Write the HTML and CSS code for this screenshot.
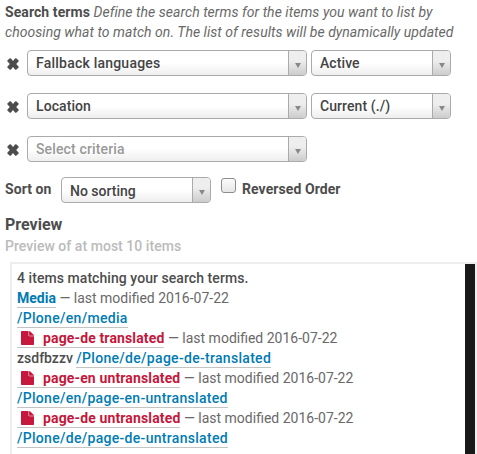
FILE: index.html
```
<!DOCTYPE html>
<html lang="en">
<head>
<meta charset="utf-8">
<title>Search terms</title>
<link rel="stylesheet" href="styles.css">
</head>
<body>
<svg class="defs" aria-hidden="true">
  <symbol id="times" viewBox="0 0 12 12"><path d="M2.8.2Q3.4 0 4 .6L6 2.9 8 .6Q8.6 0 9.2.2L11.6 2.4Q12 3 11.5 3.6L9.2 6 11.5 8.4Q12 9 11.6 9.6L9.2 11.7Q8.6 12 8 11.4L6 9.1 4 11.4Q3.4 12 2.8 11.7L.4 9.6Q0 9 .5 8.4L2.8 6 .5 3.6Q0 3 .4 2.4Z"/></symbol>
  <symbol id="file" viewBox="0 0 13 14"><path d="M.8 0H7.6v4.4c0 .5.3.8.8.8H13v8c0 .5-.3.8-.8.8H.8c-.5 0-.8-.3-.8-.8V.8C0 .3.3 0 .8 0ZM8.1 0c.5.1.9.3 1.2.6l3.1 3c.3.3.5.7.6 1.1H8.1Z"/></symbol>
</svg>
<main class="query">
  <p class="intro"><strong class="label">Search terms</strong> <em class="help">Define the search terms for the items you want to list by<br>choosing what to match on. The list of results will be dynamically updated</em></p>
  <div class="row">
    <svg class="remove"><use href="#times"/></svg>
    <div class="select wide"><span class="value spaced">Fallback languages</span><span class="arrow"></span></div>
    <div class="select narrow"><span class="value">Active</span><span class="arrow"></span></div>
  </div>
  <div class="row">
    <svg class="remove"><use href="#times"/></svg>
    <div class="select wide"><span class="value">Location</span><span class="arrow"></span></div>
    <div class="select narrow"><span class="value">Current (./)</span><span class="arrow"></span></div>
  </div>
  <div class="row">
    <svg class="remove"><use href="#times"/></svg>
    <div class="select wide"><span class="value placeholder">Select criteria</span><span class="arrow"></span></div>
  </div>
  <div class="sort">
    <span class="label sort-label">Sort on</span>
    <div class="select sorting"><span class="value">No sorting</span><span class="arrow"></span></div>
    <span class="checkbox"></span>
    <span class="label reversed">Reversed Order</span>
  </div>
  <h2 class="title">Preview</h2>
  <p class="note">Preview of at most 10 items</p>
  <section class="results">
    <div class="list">
      <div class="count">4 items matching your search terms.</div>
      <div><a class="link strong">Media</a> <span class="date">— last modified 2016-07-22</span></div>
      <div><a class="link path">/Plone/en/media</a></div>
      <div><a class="link private"><svg class="file"><use href="#file"/></svg>page-de translated</a> <span class="date">— last modified 2016-07-22</span></div>
      <div>zsdfbzzv <a class="link path">/Plone/de/page-de-translated</a></div>
      <div><a class="link private"><svg class="file"><use href="#file"/></svg>page-en untranslated</a> <span class="date">— last modified 2016-07-22</span></div>
      <div><a class="link path">/Plone/en/page-en-untranslated</a></div>
      <div><a class="link private"><svg class="file"><use href="#file"/></svg>page-de untranslated</a> <span class="date">— last modified 2016-07-22</span></div>
      <div><a class="link path">/Plone/de/page-de-untranslated</a></div>
    </div>
    <div class="scrollbar"></div>
  </section>
</main>
</body>
</html>
```
FILE: styles.css
```
* { box-sizing: border-box; }
body { margin: 0; background: #fff; color: #4d4d4d; font: 500 14px/20px Roboto, sans-serif; overflow: hidden; }
.defs { display: none; }
.query { height: 454px; padding-top: 2px; display: flex; flex-direction: column; white-space: nowrap; }
.intro { margin: 0 0 8px 5px; height: 40px; }
.label { font-weight: 700; letter-spacing: .08px; }
.help { font-weight: 400; color: #696969; letter-spacing: .04px; }
.row { display: flex; height: 26px; margin: 0 0 17px 7px; gap: 4px; }
.remove { width: 12px; height: 12px; margin: 8px 4px 0 0; fill: #4d4d4d; }
.select { display: flex; height: 26px; border: 1px solid #aaa; border-radius: 4px; overflow: hidden; background: linear-gradient(#fff 50%, #eee); color: #444; }
.wide { width: 280px; }
.narrow { width: 140px; }
.sorting { width: 150px; }
.value { flex: 1; padding-left: 8px; line-height: 25px; letter-spacing: .08px; }
.row .value { line-height: 24px; }
.sorting .value { line-height: 26px; letter-spacing: 0; }
.row .spaced { letter-spacing: .22px; }
.row .placeholder { color: #999; letter-spacing: .14px; }
.arrow { width: 18px; border-left: 1px solid #aaa; background: linear-gradient(#eee 40%, #ccc); display: flex; justify-content: center; padding-top: 12px; }
.arrow::before { content: ""; height: 0; border: 3px solid transparent; border-top: 5px solid #888; border-bottom: 0; }
.sort { display: flex; height: 26px; margin: -2px 0 12px 5px; }
.sort-label { width: 56px; line-height: 24px; }
.checkbox { width: 15px; height: 15px; margin: 1px 6px 0 10px; border: 1px solid #8d8d8d; border-radius: 3px; background: linear-gradient(#fbfbfb, #e6e6e6); }
.reversed { line-height: 24px; }
.title { margin: 0 0 1px 5px; font-size: 16px; line-height: 20px; font-weight: 700; }
.note { margin: 0 0 6px 5px; color: #bbb; letter-spacing: .04px; }
.results { flex: 1; margin-left: 10px; border: 2px solid #eee; border-bottom: 0; display: flex; }
.list { flex: 1; padding: 4px 0 0 5px; }
.list > div { height: 20px; }
.count { letter-spacing: .06px; }
.link { display: inline-block; height: 20px; color: #007bb3; border-bottom: 1px solid #c4c4c4; }
.path { letter-spacing: .3px; }
.strong, .private { font-weight: 700; }
.private { color: #c4183c; letter-spacing: .14px; }
.date { font-weight: 400; color: #696969; }
.file { width: 13px; height: 14px; margin: 0 9px 0 4px; fill: #c4183c; vertical-align: -2px; }
.scrollbar { width: 10px; background: #191919; }
```
